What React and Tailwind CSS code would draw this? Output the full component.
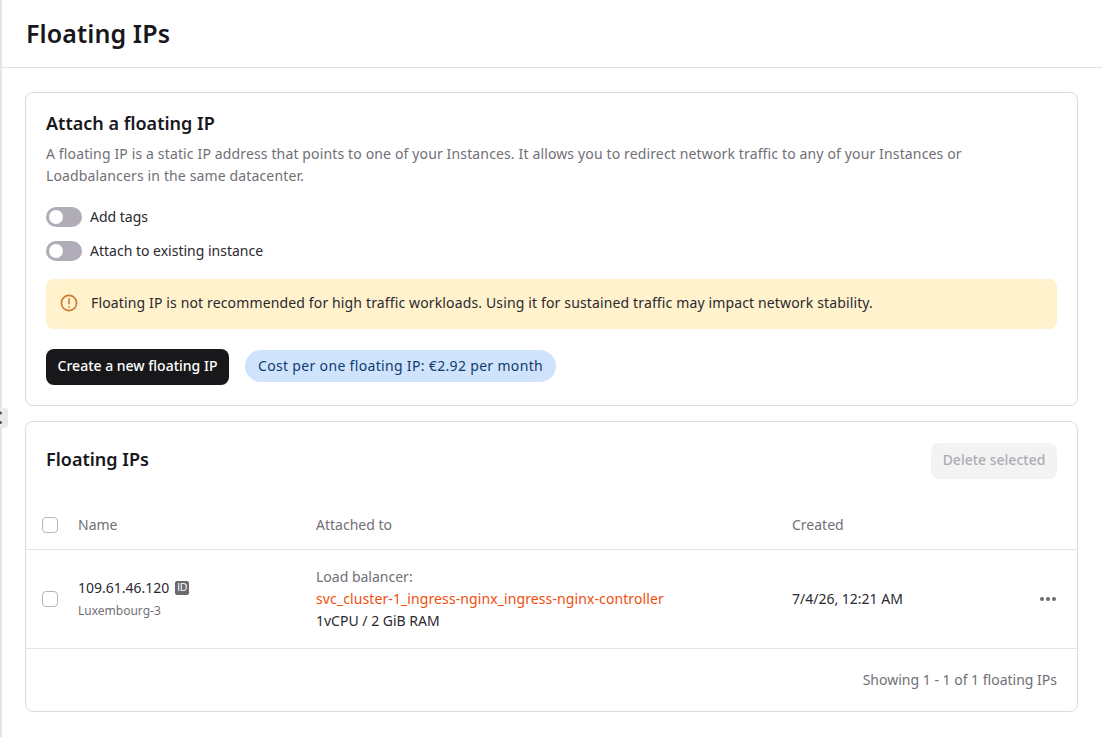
import React from 'react';

function Toggle({ label }) {
  return (
    <div className="flex items-center gap-2 h-5">
      <div className="w-9 h-5 rounded-full bg-[#b1adb8] p-[3px]">
        <div className="w-[14px] h-[14px] rounded-full bg-white"></div>
      </div>
      <span className="text-sm text-[#2b2930]">{label}</span>
    </div>
  );
}

function Checkbox() {
  return <div className="w-4 h-4 rounded-[4px] border border-[#b9b7bd] bg-white shrink-0"></div>;
}

export default function App() {
  return (
    <div className="relative h-[737px] bg-white border-l-2 border-[#e5e5e7] text-[#18171c] font-['Noto_Sans',sans-serif]">
      <svg className="absolute left-[-2px] top-[408px]" width="8" height="20" viewBox="0 0 8 20">
        <path d="M0 0h5a3 3 0 0 1 3 3v14a3 3 0 0 1-3 3H0z" fill="#eaeaec" />
        <circle cx="0.5" cy="5" r="1.5" fill="#55535a" />
        <circle cx="0.5" cy="14.5" r="1.5" fill="#55535a" />
      </svg>

      <header className="h-[68px] border-b border-[#e0e0e2] pl-6 pt-[14px]">
        <h1 className="text-[25px] leading-[38px] font-semibold tracking-[0.1px]">Floating IPs</h1>
      </header>

      <main className="pl-[23px] pr-6 pt-6 flex flex-col gap-4">
        <section className="h-[314px] rounded-lg border border-[#dcdcde] pl-5 pr-5 pt-[19px]">
          <h2 className="text-lg leading-[22px] font-semibold">Attach a floating IP</h2>
          <p className="mt-[9px] text-sm tracking-[0.14px] leading-[22px] text-[#716f76]">
            A floating IP is a static IP address that points to one of your Instances. It allows you to redirect network traffic to any of your Instances or Loadbalancers in the same datacenter.
          </p>
          <div className="mt-[20px] flex flex-col gap-[14px]">
            <Toggle label="Add tags" />
            <Toggle label="Attach to existing instance" />
          </div>
          <div className="mt-[18px] h-[50px] rounded-lg bg-[#fff2cc] px-[14px] pb-[2px] flex items-center gap-[13px]">
            <svg width="18" height="18" viewBox="0 0 18 18" fill="none" stroke="#cf7a30" strokeWidth="1.6" strokeLinecap="round">
              <circle cx="9" cy="9" r="7.6" />
              <path d="M9 4.8v5" />
              <path d="M9 12.8v.1" />
            </svg>
            <span className="text-sm tracking-[0.14px] text-[#2b2930]">Floating IP is not recommended for high traffic workloads. Using it for sustained traffic may impact network stability.</span>
          </div>
          <div className="mt-5 flex items-start gap-4">
            <button className="w-[183px] h-9 pb-[2px] rounded-lg bg-[#18171a] text-white text-sm font-medium">Create a new floating IP</button>
            <div className="mt-[1px] w-[311px] h-8 rounded-full bg-[#cfe4fc] text-[#0f3b6e] text-sm tracking-[0.33px] flex items-center justify-center">Cost per one floating IP: €2.92 per month</div>
          </div>
        </section>

        <section className="h-[291px] rounded-lg border border-[#dcdcde] -mt-[1px]">
          <div className="h-[84px] pl-5 pr-5 pt-[21px] flex items-start justify-between">
            <h2 className="text-lg leading-[32px] font-semibold">Floating IPs</h2>
            <button className="w-[126px] h-9 pb-[2px] rounded-lg bg-[#f3f3f4] text-[#aeacb4] text-sm font-medium">Delete selected</button>
          </div>
          <div className="h-[44px] pb-[6px] border-b border-[#e5e5e7] flex items-center text-sm text-[#716f76]">
            <div className="w-[290px] pl-4 flex items-center gap-5">
              <Checkbox />
              <span>Name</span>
            </div>
            <div className="w-[476px]">Attached to</div>
            <div>Created</div>
          </div>
          <div className="h-[99px] border-b border-[#e5e5e7] flex items-center">
            <div className="w-[290px] pl-4 flex items-center gap-5">
              <Checkbox />
              <div className="pb-[2px]">
                <div className="flex items-center gap-[6px] text-sm leading-5 text-[#2b2930]">
                  109.61.46.120
                  <span className="w-[14px] h-[14px] rounded-[2px] bg-[#6b6970] text-white text-[10px] leading-[14px] text-center font-['Liberation_Sans',sans-serif]">ID</span>
                </div>
                <div className="mt-[5px] text-xs leading-4 text-[#716f76]">Luxembourg-3</div>
              </div>
            </div>
            <div className="w-[476px] text-sm leading-[22px]">
              <div className="text-[#716f76]">Load balancer:</div>
              <div className="text-[#f04e0c] tracking-[0.1px]">svc_cluster-1_ingress-nginx_ingress-nginx-controller</div>
              <div className="text-[#2b2930]">1vCPU / 2 GiB RAM</div>
            </div>
            <div className="flex-1 text-sm text-[#2b2930]">7/4/26, 12:21 AM</div>
            <svg className="mr-[20px]" width="18" height="6" viewBox="0 0 18 6" fill="#6b6970">
              <circle cx="3" cy="3" r="2" />
              <circle cx="9" cy="3" r="2" />
              <circle cx="15" cy="3" r="2" />
            </svg>
          </div>
          <div className="h-[62px] pr-5 flex items-center justify-end text-sm text-[#716f76]">Showing 1 - 1 of 1 floating IPs</div>
        </section>
      </main>
    </div>
  );
}
